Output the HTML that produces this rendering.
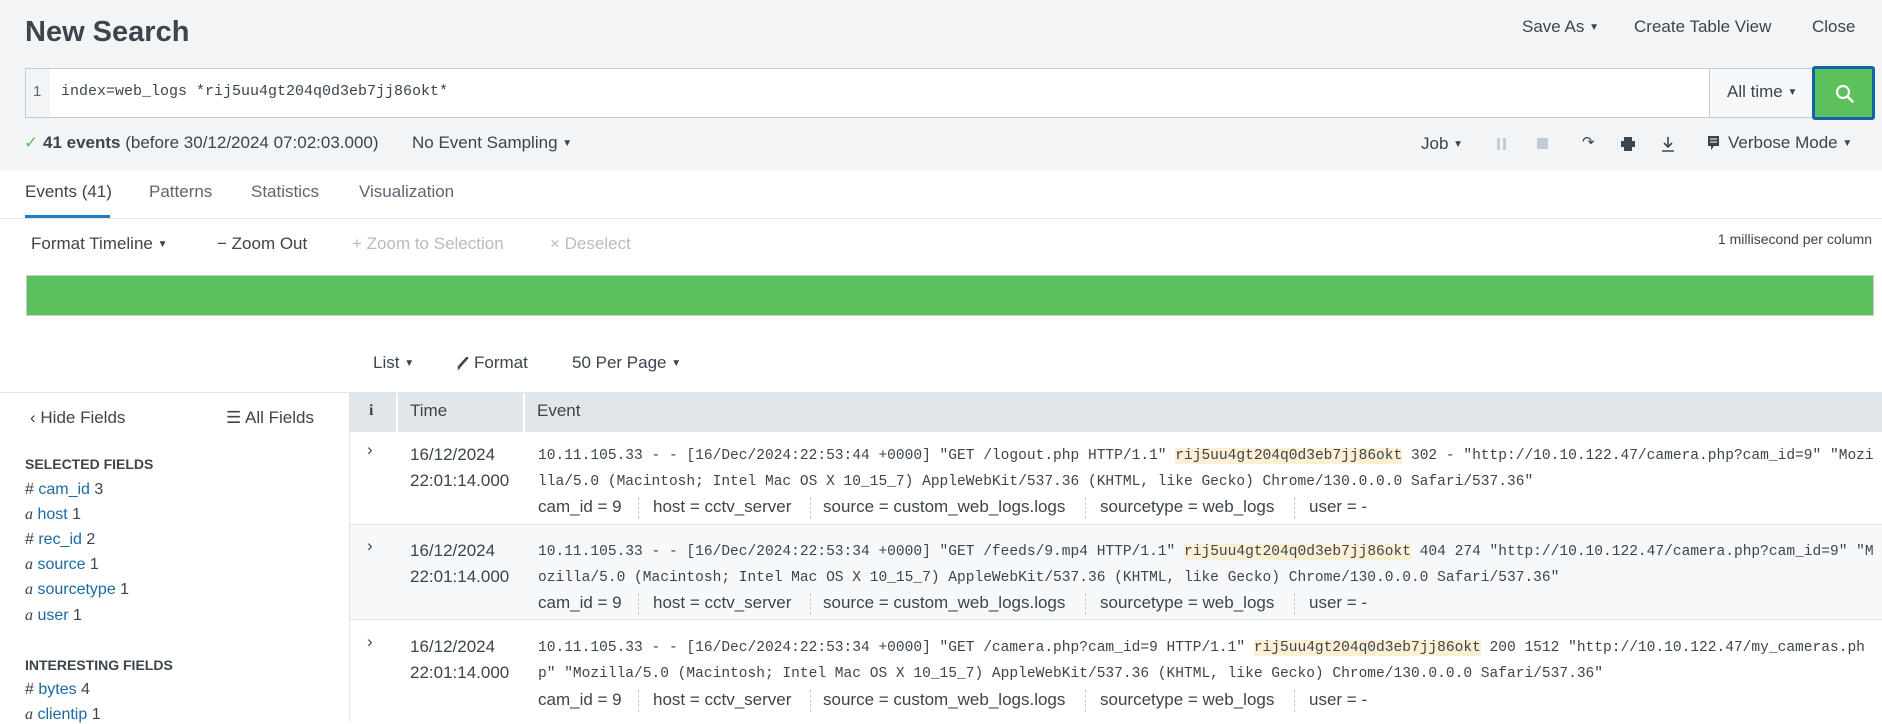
<!DOCTYPE html>
<html><head><meta charset="utf-8"><style>
*{margin:0;padding:0;box-sizing:border-box}
body{width:1882px;height:722px;overflow:hidden;background:#fff;font-family:"Liberation Sans",sans-serif;color:#3c444d;position:relative;font-size:16px}
.a{position:absolute;white-space:nowrap}
.gray{background:#f2f4f5}
.mono{font-family:"Liberation Mono",monospace;font-size:14.55px;white-space:pre;color:#3c444d}
.car{font-size:10px;vertical-align:2px}
.blue{color:#1a6aa3}
.hl{background:#fcefd3}
.fl{font-size:16px;color:#3c444d}
.sep{position:absolute;top:0;height:22px;border-left:1px dashed #c3cbd4}
</style></head><body>
<div class="a gray" style="left:0;top:0;width:1882px;height:170px"></div>
<div class="a" style="left:25px;top:16px;font-size:29px;font-weight:bold;color:#3c444d">New Search</div>
<div class="a" style="left:1522px;top:17px;font-size:17px">Save As <span class="car">▼</span></div>
<div class="a" style="left:1634px;top:17px;font-size:17px">Create Table View</div>
<div class="a" style="left:1812px;top:17px;font-size:17px">Close</div>
<!-- search bar -->
<div class="a" style="left:25px;top:68px;width:1790px;height:50px;background:#fff;border:1px solid #c3cbd4"></div>
<div class="a" style="left:26px;top:69px;width:24px;height:48px;background:#f2f4f5"></div>
<div class="a" style="left:33px;top:83px;font-size:15px;color:#5c6773">1</div>
<div class="a mono" style="left:61px;top:83px;font-size:15px">index=web_logs *rij5uu4gt204q0d3eb7jj86okt*</div>
<div class="a" style="left:1709px;top:69px;width:104px;height:48px;background:#f7f8fa;border-left:1px solid #c3cbd4"></div>
<div class="a" style="left:1727px;top:82px;font-size:17px">All time <span class="car">▼</span></div>
<div class="a" style="left:1812px;top:66px;width:63px;height:54px;background:#5cc05c;border:3px solid #1165a5;border-radius:3px"></div>
<svg class="a" style="left:1834px;top:83px" width="22" height="22" viewBox="0 0 22 22"><circle cx="9" cy="9" r="6" fill="none" stroke="#fff" stroke-width="2.2"/><path d="M13.5 13.5l5 5" stroke="#fff" stroke-width="2.4" stroke-linecap="round"/></svg>
<!-- status row -->
<div class="a" style="left:24px;top:133px;font-size:17px"><span style="color:#5cc05c">✓</span> <b>41 events</b> (before 30/12/2024 07:02:03.000)</div>
<div class="a" style="left:412px;top:133px;font-size:17px">No Event Sampling <span class="car">▼</span></div>
<div class="a" style="left:1421px;top:134px;font-size:17px">Job <span class="car">▼</span></div>
<div class="a" style="left:1497px;top:138px;width:3px;height:12px;background:#c3cbd4"></div>
<div class="a" style="left:1503px;top:138px;width:3px;height:12px;background:#c3cbd4"></div>
<div class="a" style="left:1537px;top:138px;width:11px;height:11px;background:#c3cbd4"></div>
<div class="a" style="left:1582px;top:133px;font-size:15px">↷</div>
<svg class="a" style="left:1621px;top:137px" width="14" height="14"><rect x="3" y="0" width="8" height="4" fill="#3c444d"/><rect x="0" y="4" width="14" height="6" fill="#3c444d"/><rect x="3" y="9" width="8" height="5" fill="#3c444d"/></svg>
<svg class="a" style="left:1661px;top:136px" width="14" height="16"><path d="M7 1v10M3 7l4 4 4-4M1 15h12" stroke="#3c444d" stroke-width="1.6" fill="none"/></svg>
<svg class="a" style="left:1708px;top:136px" width="12" height="14"><rect x="0" y="0" width="11" height="10" fill="#3c444d"/><path d="M2 3h7M2 6h7" stroke="#fff"/><path d="M3 10l0 4 3-4z" fill="#3c444d"/></svg>
<div class="a" style="left:1728px;top:133px;font-size:17px">Verbose Mode <span class="car">▼</span></div>
<!-- tabs -->
<div class="a" style="left:25px;top:182px;font-size:17px">Events (41)</div>
<div class="a" style="left:149px;top:182px;font-size:17px;color:#5c6773">Patterns</div>
<div class="a" style="left:251px;top:182px;font-size:17px;color:#5c6773">Statistics</div>
<div class="a" style="left:359px;top:182px;font-size:17px;color:#5c6773">Visualization</div>
<div class="a" style="left:25px;top:215px;width:85px;height:3px;background:#1a7bbf"></div>
<div class="a" style="left:0;top:218px;width:1882px;height:1px;background:#e1e6eb"></div>
<!-- timeline -->
<div class="a" style="left:31px;top:234px;font-size:17px">Format Timeline <span class="car">▼</span></div>
<div class="a" style="left:217px;top:234px;font-size:17px">− Zoom Out</div>
<div class="a" style="left:352px;top:234px;font-size:17px;color:#b5bcc4">+ Zoom to Selection</div>
<div class="a" style="left:550px;top:234px;font-size:17px;color:#b5bcc4">× Deselect</div>
<div class="a" style="right:10px;top:231px;font-size:14px">1 millisecond per column</div>
<div class="a" style="left:26px;top:275px;width:1848px;height:41px;background:#5cc05c;border:1px solid #c3cbd4"></div>
<!-- list row -->
<div class="a" style="left:373px;top:353px;font-size:17px">List <span class="car">▼</span></div>
<svg class="a" style="left:455px;top:357px" width="14" height="14"><path d="M12 1L4 10" stroke="#3c444d" stroke-width="2.6" stroke-linecap="round"/><path d="M4 10l-2 3 3-1z" fill="#3c444d"/></svg>
<div class="a" style="left:474px;top:353px;font-size:17px">Format</div>
<div class="a" style="left:572px;top:353px;font-size:17px">50 Per Page <span class="car">▼</span></div>
<div class="a" style="left:0;top:392px;width:1882px;height:1px;background:#e1e6eb"></div>
<div class="a" style="left:349px;top:392px;width:1px;height:330px;background:#e1e6eb"></div>
<!-- left panel -->
<div class="a" style="left:30px;top:408px;font-size:17px">‹ Hide Fields</div>
<div class="a" style="left:226px;top:408px;font-size:17px">☰ All Fields</div>
<div class="a" style="left:25px;top:456px;font-size:14px;font-weight:bold;color:#3c444d">SELECTED FIELDS</div>
<div class="a fl" style="left:25px;top:481px"># <span class="blue">cam_id</span> 3</div>
<div class="a fl" style="left:25px;top:506px"><i style="font-family:'Liberation Serif'">a</i> <span class="blue">host</span> 1</div>
<div class="a fl" style="left:25px;top:531px"># <span class="blue">rec_id</span> 2</div>
<div class="a fl" style="left:25px;top:556px"><i style="font-family:'Liberation Serif'">a</i> <span class="blue">source</span> 1</div>
<div class="a fl" style="left:25px;top:581px"><i style="font-family:'Liberation Serif'">a</i> <span class="blue">sourcetype</span> 1</div>
<div class="a fl" style="left:25px;top:607px"><i style="font-family:'Liberation Serif'">a</i> <span class="blue">user</span> 1</div>
<div class="a" style="left:25px;top:657px;font-size:14px;font-weight:bold">INTERESTING FIELDS</div>
<div class="a fl" style="left:25px;top:681px"># <span class="blue">bytes</span> 4</div>
<div class="a fl" style="left:25px;top:706px"><i style="font-family:'Liberation Serif'">a</i> <span class="blue">clientip</span> 1</div>
<!-- table header -->
<div class="a" style="left:350px;top:393px;width:1532px;height:39px;background:#e1e6eb"></div>
<div class="a" style="left:396px;top:393px;width:2px;height:39px;background:#fff"></div>
<div class="a" style="left:523px;top:393px;width:2px;height:39px;background:#fff"></div>
<div class="a" style="left:369px;top:402px;font-size:16px;font-weight:bold;font-family:'Liberation Serif'">i</div>
<div class="a" style="left:410px;top:401px;font-size:17px">Time</div>
<div class="a" style="left:537px;top:401px;font-size:17px">Event</div>
<!-- rows -->
<div class="a" style="left:350px;top:524px;width:1532px;height:96px;background:#f7f8fa;border-top:1px solid #e1e6eb;border-bottom:1px solid #e1e6eb"></div>

<div class="a" style="left:367px;top:440px;font-size:17px">›</div>
<div class="a" style="left:410px;top:442px;font-size:17px;line-height:26px;white-space:normal;width:110px">16/12/2024 22:01:14.000</div>
<div class="a mono" style="left:538px;top:443px;line-height:26px">10.11.105.33 - - [16/Dec/2024:22:53:44 +0000] "GET /logout.php HTTP/1.1" <span class="hl">rij5uu4gt204q0d3eb7jj86okt</span> 302 - "http://10.10.122.47/camera.php?cam_id=9" "Mozi
lla/5.0 (Macintosh; Intel Mac OS X 10_15_7) AppleWebKit/537.36 (KHTML, like Gecko) Chrome/130.0.0.0 Safari/537.36"</div>

<div class="a" style="left:367px;top:536px;font-size:17px">›</div>
<div class="a" style="left:410px;top:538px;font-size:17px;line-height:26px;white-space:normal;width:110px">16/12/2024 22:01:14.000</div>
<div class="a mono" style="left:538px;top:539px;line-height:26px">10.11.105.33 - - [16/Dec/2024:22:53:34 +0000] "GET /feeds/9.mp4 HTTP/1.1" <span class="hl">rij5uu4gt204q0d3eb7jj86okt</span> 404 274 "http://10.10.122.47/camera.php?cam_id=9" "M
ozilla/5.0 (Macintosh; Intel Mac OS X 10_15_7) AppleWebKit/537.36 (KHTML, like Gecko) Chrome/130.0.0.0 Safari/537.36"</div>

<div class="a" style="left:367px;top:632px;font-size:17px">›</div>
<div class="a" style="left:410px;top:634px;font-size:17px;line-height:26px;white-space:normal;width:110px">16/12/2024 22:01:14.000</div>
<div class="a mono" style="left:538px;top:635px;line-height:26px">10.11.105.33 - - [16/Dec/2024:22:53:34 +0000] "GET /camera.php?cam_id=9 HTTP/1.1" <span class="hl">rij5uu4gt204q0d3eb7jj86okt</span> 200 1512 "http://10.10.122.47/my_cameras.ph
p" "Mozilla/5.0 (Macintosh; Intel Mac OS X 10_15_7) AppleWebKit/537.36 (KHTML, like Gecko) Chrome/130.0.0.0 Safari/537.36"</div>

<div class="a" style="left:538px;top:497px;width:1300px;height:22px;font-size:17px">
<span class="a" style="left:0">cam_id = 9</span><span class="sep" style="left:100px"></span>
<span class="a" style="left:115px">host = cctv_server</span><span class="sep" style="left:272px"></span>
<span class="a" style="left:285px">source = custom_web_logs.logs</span><span class="sep" style="left:547px"></span>
<span class="a" style="left:562px">sourcetype = web_logs</span><span class="sep" style="left:756px"></span>
<span class="a" style="left:771px">user = -</span></div>
<div class="a" style="left:538px;top:593px;width:1300px;height:22px;font-size:17px">
<span class="a" style="left:0">cam_id = 9</span><span class="sep" style="left:100px"></span>
<span class="a" style="left:115px">host = cctv_server</span><span class="sep" style="left:272px"></span>
<span class="a" style="left:285px">source = custom_web_logs.logs</span><span class="sep" style="left:547px"></span>
<span class="a" style="left:562px">sourcetype = web_logs</span><span class="sep" style="left:756px"></span>
<span class="a" style="left:771px">user = -</span></div>
<div class="a" style="left:538px;top:690px;width:1300px;height:22px;font-size:17px">
<span class="a" style="left:0">cam_id = 9</span><span class="sep" style="left:100px"></span>
<span class="a" style="left:115px">host = cctv_server</span><span class="sep" style="left:272px"></span>
<span class="a" style="left:285px">source = custom_web_logs.logs</span><span class="sep" style="left:547px"></span>
<span class="a" style="left:562px">sourcetype = web_logs</span><span class="sep" style="left:756px"></span>
<span class="a" style="left:771px">user = -</span></div>
</body></html>
